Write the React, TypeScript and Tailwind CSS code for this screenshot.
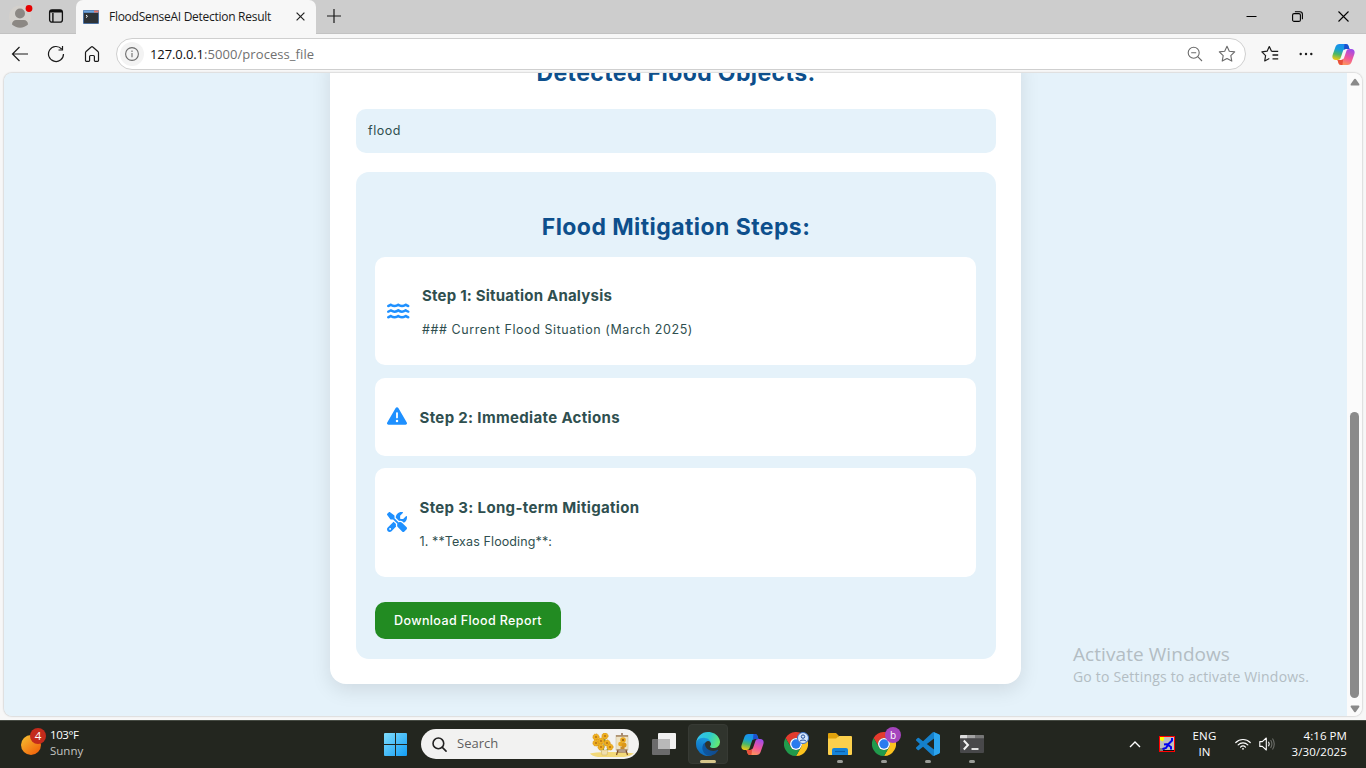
import type { ReactNode } from 'react';
import { FaWater, FaTriangleExclamation, FaScrewdriverWrench } from 'react-icons/fa6';

function CopilotLogo({ id, className }: { id: string; className: string }) {
  const shape =
    'M8 1.5h6.2c1.6 0 2.4.8 2.9 2.2l.9 2.900h-3.600c-1.600 0-2.600.8-3.100 2.300L9.200 15.300c-.5 1.500-1.400 2.200-2.900 2.200H4.200C1.200 17.500.300 15.200 1.200 12.200L3.900 4.400C4.600 2.500 5.900 1.500 8 1.500Z';
  return (
    <svg viewBox="0.500 0.500 23 23" className={className}>
      <defs>
        <linearGradient id={`${id}a`} x1="0.5" y1="0" x2="0.25" y2="1">
          <stop offset="0" stopColor="#1b8df0" />
          <stop offset="0.35" stopColor="#169fd8" />
          <stop offset="0.65" stopColor="#4cb765" />
          <stop offset="1" stopColor="#f2c811" />
        </linearGradient>
        <linearGradient id={`${id}b`} x1="0.3" y1="1" x2="0.7" y2="0">
          <stop offset="0" stopColor="#a04bea" />
          <stop offset="0.5" stopColor="#f0569c" />
          <stop offset="1" stopColor="#ff9a54" />
        </linearGradient>
      </defs>
      <path d={shape} fill={`url(#${id}a)`} />
      <path d="M13 1.500h1.300c1.500 0 2.400.8 2.800 2.200l.9 2.900h-3.600c-.8 0-1.400.2-2 .6Z" fill="#1c50cf" />
      <g transform="rotate(180 12 12)">
        <path d={shape} fill={`url(#${id}b)`} />
        <path d="M13 1.500h1.300c1.500 0 2.400.8 2.800 2.200l.9 2.900h-3.600c-.8 0-1.400.2-2 .6Z" fill="#e8503a" />
      </g>
    </svg>
  );
}

function ChromeLogo() {
  return (
    <svg viewBox="0 0 48 48" className="size-6">
      <path d="M24 12H44.800A24 24 0 0 0 3.200 12L13.600 30A12 12 0 0 1 24 12Z" fill="#e33b2e" />
      <path d="M44.800 12A24 24 0 0 1 24 48L34.400 30A12 12 0 0 0 24 12Z" fill="#fcc31e" />
      <path d="M3.200 12A24 24 0 0 0 24 48L34.400 30A12 12 0 0 1 13.600 30Z" fill="#219a4c" />
      <circle cx="24" cy="24" r="12" fill="#fff" />
      <circle cx="24" cy="24" r="9.400" fill="#2a7bee" />
    </svg>
  );
}

function EdgeLogo() {
  return (
    <svg viewBox="0 0 256 256" className="size-6">
      <defs>
        <linearGradient id="edgeBase" x1="0" y1="0" x2="1" y2="0">
          <stop offset="0" stopColor="#0c59a4" />
          <stop offset="1" stopColor="#114a8b" />
        </linearGradient>
        <linearGradient id="edgeMid" x1="0.6" y1="0" x2="0.3" y2="1">
          <stop offset="0" stopColor="#1b9de2" />
          <stop offset="1" stopColor="#0b66ba" />
        </linearGradient>
        <linearGradient id="edgeTop" x1="0" y1="0.3" x2="1" y2="0.6">
          <stop offset="0" stopColor="#35c1f1" />
          <stop offset="0.5" stopColor="#2cc9d0" />
          <stop offset="1" stopColor="#66eb6e" />
        </linearGradient>
      </defs>
      <path d="M231 190.500c-3.400 1.800-6.900 3.400-10.500 4.700a101.500 101.500 0 0 1-35.900 6.500c-47.300 0-88.500-32.500-88.500-74.300a31.500 31.500 0 0 1 16.400-27.300c-42.800 1.800-53.800 46.400-53.800 72.500 0 74 68.100 81.400 82.800 81.400 7.900 0 19.800-2.300 27-4.600l1.300-.4a128.300 128.300 0 0 0 66.600-52.800 4 4 0 0 0-5.400-5.700z" fill="url(#edgeBase)" />
      <path d="M105.700 241.400a79.200 79.200 0 0 1-22.700-21.300 80.700 80.700 0 0 1 29.500-120c3.200-1.500 8.500-4.100 15.600-4a32.400 32.400 0 0 1 25.700 13 31.900 31.900 0 0 1 6.300 18.700c0-.2 24.500-79.600-80-79.600-43.900 0-80 41.700-80 78.200a130.200 130.200 0 0 0 12.100 56 128 128 0 0 0 156.400 67 75.500 75.500 0 0 1-62.800-8z" fill="url(#edgeMid)" />
      <path d="M152.300 148.900c-.8 1-3.300 2.500-3.300 5.700 0 2.600 1.700 5.100 4.700 7.200 14.400 10 41.500 8.700 41.600 8.700a59.600 59.600 0 0 0 30.300-8.300 61.400 61.400 0 0 0 30.400-52.900c.3-22.400-8-37.300-11.300-43.900C223.500 23.900 177.700 0 128 0A128 128 0 0 0 0 126.200c.5-36.500 36.800-66 80-66 3.500 0 23.500.3 42 10a72.600 72.600 0 0 1 30.900 29.300c6.100 10.600 7.200 24.100 7.200 29.500s-2.700 13.300-7.800 19.900z" fill="url(#edgeTop)" />
    </svg>
  );
}

function TabStrip() {
  return (
    <div className="flex h-[34px] shrink-0 border-b border-[#c2c2c2] bg-[#cdcdcd]">
      <div className="flex w-[76px] shrink-0 items-center pl-2">
        <svg viewBox="0 0 26 26" className="size-[26px]">
          <circle cx="12" cy="12.500" r="11" fill="#d3d0cc" />
          <circle cx="12" cy="9.500" r="5" fill="#8c8884" />
          <path d="M4 20.500c0-3 2-4.500 4-4.500h8c2 0 4 1.500 4 4.500-2 2-5 3.200-8 3.200s-6-1.200-8-3.200Z" fill="#8c8884" />
          <circle cx="21" cy="4.500" r="3.400" fill="#e60000" />
        </svg>
        <svg viewBox="0 0 16 16" className="-mt-px ml-[14px] size-4" fill="none" stroke="#111" strokeWidth="1.300">
          <rect x="1.600" y="1.800" width="12.800" height="12.400" rx="2.500" />
          <path d="M2 3.800h12M4.900 5v9" strokeWidth="1.400" />
          <path d="M2.500 2.900h11" strokeWidth="2" />
        </svg>
      </div>
      <div className="-mb-px flex w-[240px] shrink-0 items-center rounded-t-[7px] bg-[#f7f7f7] pb-px pl-[7px]">
        <svg viewBox="0 0 16 14" className="h-[14px] w-4">
          <rect width="16" height="14" rx="1" fill="#4b6f9f" />
          <rect x="0.500" y="0.500" width="15" height="2" fill="#6fa5dd" />
          <rect x="11" y="0.500" width="4.500" height="2" fill="#e5776a" />
          <rect x="1" y="3" width="14" height="10" fill="#2e3338" />
          <path d="M3 5l1.500 1.300L3 7.600" fill="none" stroke="#fff" strokeWidth="1" />
        </svg>
        <span className="ml-[10px] w-[187px] whitespace-nowrap text-[12px] tracking-[-0.274px] text-[#1a1a1a]">FloodSenseAI Detection Result</span>
        <svg viewBox="0 0 9 9" className="size-[9px]" fill="none" stroke="#222" strokeWidth="1.200">
          <path d="M.6.6l7.800 7.800M8.400.6L.6 8.400" />
        </svg>
      </div>
      <div className="flex flex-1 items-center pl-[11px]">
        <svg viewBox="0 0 14 14" className="-mt-px size-[14px]" fill="none" stroke="#1a1a1a" strokeWidth="1.200">
          <path d="M7 0v14M0 7h14" />
        </svg>
      </div>
      <div className="flex items-center gap-[35px] pr-[17px] text-black">
        <svg viewBox="0 0 11 11" className="size-[11px]" fill="none" stroke="currentColor">
          <path d="M.5 5.500h10" />
        </svg>
        <svg viewBox="0 0 11 11" className="size-[11px]" fill="none" stroke="currentColor" strokeWidth="1.100">
          <rect x="0.600" y="2.600" width="7.800" height="7.800" rx="1.500" />
          <path d="M2.900.7h5c1.500 0 2.500 1 2.500 2.500v5" />
        </svg>
        <svg viewBox="0 0 11 11" className="size-[11px]" fill="none" stroke="currentColor" strokeWidth="1.100">
          <path d="M.5.5l10 10M10.500.5l-10 10" />
        </svg>
      </div>
    </div>
  );
}

function Toolbar() {
  return (
    <div className="flex h-[39px] shrink-0 items-center bg-[#f7f7f7] pt-px text-[#1b1b1b]">
      <svg viewBox="0 0 18 18" className="ml-[11px] size-[18px]" fill="none" stroke="currentColor" strokeWidth="1.200">
        <path d="M17 9H1.500M8.500 2L1.500 9l7 7" />
      </svg>
      <svg viewBox="0 0 18 18" className="ml-[18px] size-[18px]" fill="none" stroke="currentColor" strokeWidth="1.200">
        <path d="M16.500 9A7.500 7.500 0 1 1 14.600 4M15.500 1v4h-4" />
      </svg>
      <svg viewBox="0 0 18 18" className="ml-[18px] size-[18px]" fill="none" stroke="currentColor" strokeWidth="1.200" strokeLinejoin="round">
        <path d="M2.500 7.800c0-.6.200-1 .6-1.300L8.200 2c.5-.5 1.100-.5 1.600 0l5.100 4.500c.4.300.6.700.6 1.300v7.700c0 .5-.3.800-.8.800h-2.500c-.5 0-.8-.3-.8-.8v-4c0-.6-.4-1-1-1H7.600c-.6 0-1 .4-1 1v4c0 .5-.3.800-.8.800H3.300c-.5 0-.8-.3-.8-.8Z" />
      </svg>
      <div className="ml-[15px] flex h-8 w-[1130px] items-center rounded-full border border-[#cfcfcf] bg-white pl-[3px] pr-[9px] text-[13px]">
        <span className="flex size-6 items-center justify-center rounded-full bg-[#f3f3f3]">
          <svg viewBox="0 0 14 14" className="size-[14px]" fill="none" stroke="#6b6b6b" strokeWidth="1.100">
            <circle cx="7" cy="7" r="6.400" />
            <path d="M7 6v4.300" />
            <path d="M7 3.600v1.300" />
          </svg>
        </span>
        <span className="ml-[6px] pt-px tracking-[-0.1px] text-[#111]">127.0.0.1</span>
        <span className="pt-px tracking-[0.075px] text-[#707070]">:5000/process_file</span>
        <svg viewBox="0 0 16 16" className="ml-auto size-4" fill="none" stroke="#6b6b6b" strokeWidth="1.100">
          <circle cx="6.700" cy="6.700" r="5.500" />
          <path d="M10.700 10.700L15 15M4.200 6.700h5" />
        </svg>
        <svg viewBox="0 0 18 18" className="ml-[15px] size-[18px]" fill="none" stroke="#6b6b6b" strokeWidth="1.100" strokeLinejoin="round">
          <path d="M9 1.300l2.300 4.900 5.400.7-3.900 3.800 1 5.400L9 13.500l-4.800 2.600 1-5.400L1.300 6.900l5.400-.7Z" />
        </svg>
      </div>
      <svg viewBox="0 0 18 18" className="ml-[15px] size-[18px]" fill="none" stroke="currentColor" strokeWidth="1.200" strokeLinejoin="round">
        <path d="M10.500 6.200L8.300 1.500 6.100 6.200l-5.200.7 3.700 3.700-.9 5.400 4.600-2.500" />
        <path d="M10.400 6.300h6.800M11.500 10h5.700M11.500 13.800h5.700" strokeWidth="1.300" />
      </svg>
      <svg viewBox="0 0 14 4" className="ml-[20px] h-1 w-[14px]" fill="currentColor">
        <circle cx="1.700" cy="2" r="1.200" />
        <circle cx="7" cy="2" r="1.200" />
        <circle cx="12.300" cy="2" r="1.200" />
      </svg>
      <CopilotLogo id="bar" className="ml-[19px] size-[23px]" />
    </div>
  );
}

function StepCard({ icon, title, text, className }: { icon: ReactNode; title: ReactNode; text?: ReactNode; className: string }) {
  return (
    <div className={`flex items-center gap-[12.5px] rounded-[10px] bg-white px-3 ${className}`}>
      <span className="shrink-0 text-[#1e90ff]">{icon}</span>
      <div className={text ? 'pt-[3px]' : 'pt-px'}>
        <h3 className="text-[15px] font-bold leading-[22px] whitespace-nowrap">{title}</h3>
        {text && <p className="mt-[13px] text-[12.5px] leading-5 whitespace-nowrap">{text}</p>}
      </div>
    </div>
  );
}

function ResultPage() {
  return (
    <div className="flex-1 overflow-hidden bg-[#e5f2fa] font-[Inter,sans-serif] text-[#2f4f4f]">
      <main className="-mt-[20px] ml-[326px] h-[631px] w-[691px] rounded-[16px] bg-white pl-[26px] pr-[25px] shadow-[0_6px_20px_rgba(0,0,0,0.1)]">
        <h2 className="text-center text-[23px] font-bold leading-10 tracking-[0.392px] text-[#0d4f8c]">Detected Flood Objects:</h2>
        <div className="mt-4 h-11 rounded-[10px] bg-[#e5f2fa] px-3 text-[12.5px] leading-[43px] tracking-[0.537px]">flood</div>
        <section className="mt-[19px] h-[487px] rounded-[13px] bg-[#e5f2fa] px-[19px] pt-[35px]">
          <h2 className="text-center text-[23px] font-bold leading-10 tracking-[0.429px] text-[#0d4f8c]">Flood Mitigation Steps:</h2>
          <div className="mr-px mt-[10px]">
            <StepCard
              className="h-[108px]"
              icon={<FaWater className="h-5 w-[22.5px]" preserveAspectRatio="none" />}
              title={<span className="tracking-[0.209px]">Step 1: Situation Analysis</span>}
              text={<span className="tracking-[0.58px]">### Current Flood Situation (March 2025)</span>}
            />
            <StepCard
              className="mt-[13px] h-[78px]"
              icon={<FaTriangleExclamation className="mb-[2px] size-5" />}
              title={<span className="tracking-[0.344px]">Step 2: Immediate Actions</span>}
            />
            <StepCard
              className="mt-3 h-[109px]"
              icon={<FaScrewdriverWrench className="mb-[2px] size-5" />}
              title={<span className="tracking-[0.339px]">Step 3: Long-term Mitigation</span>}
              text={<span className="tracking-[0.112px]">1. **Texas Flooding**:</span>}
            />
          </div>
          <button className="mt-[25px] flex h-[37px] w-[186px] items-center justify-center rounded-[10px] bg-[#228b22] pt-px text-[12.5px] font-medium tracking-[0.392px] whitespace-nowrap text-white">
            Download Flood Report
          </button>
        </section>
      </main>
    </div>
  );
}

function ScrollBar() {
  return (
    <div className="flex w-[15px] shrink-0 flex-col items-center bg-[#fbfbfb]">
      <svg viewBox="0 0 10 8" className="mt-[5px] h-2 w-[10px] shrink-0" fill="#8a8a8a">
        <path d="M4.300 1Q5 .3 5.700 1L9.300 6Q9.800 7.500 8.700 7.500H1.300Q.2 7.500.7 6Z" />
      </svg>
      <div className="mt-[326px] h-[286px] w-[9px] rounded-full bg-[#8a8a8a]" />
      <svg viewBox="0 0 10 8" className="mt-[7px] h-2 w-[10px] shrink-0 rotate-180" fill="#8a8a8a">
        <path d="M4.300 1Q5 .3 5.700 1L9.300 6Q9.800 7.500 8.700 7.500H1.300Q.2 7.500.7 6Z" />
      </svg>
    </div>
  );
}

function AppSlot({ children, mark }: { children: ReactNode; mark?: 'active' | 'open' }) {
  return (
    <div className="flex w-11 justify-center">
      <div className={`relative flex h-10 w-10 items-center justify-center rounded-[4px] ${mark === 'active' ? 'border border-[#373a34] bg-[#30342d]' : ''}`}>
        {children}
        {mark === 'active' && <span className="absolute bottom-0 h-[3px] w-4 rounded-full bg-[#d6c78c]" />}
        {mark === 'open' && <span className="absolute bottom-px h-[3px] w-[6px] rounded-full bg-[#9a9c97]" />}
      </div>
    </div>
  );
}

const petals = [
  [4, 4], [13, 3], [4, 10], [15, 10], [9, 8], [18, 14], [9, 14],
];

function SearchArt() {
  return (
    <svg viewBox="0 0 44 24" className="h-6 w-11">
      <path d="M0 20.500Q6 18.500 22 19T44 20.500Q40 23.500 34 24H8Q2 23 0 20.500Z" fill="#f3d978" />
      <path d="M7 10l6 10M15 5l-2 14M19 14l-4 6M8 7l6-1" stroke="#5c8a3a" strokeWidth="1.200" fill="none" />
      {petals.map(([x, y]) => (
        <g key={`${x}-${y}`}>
          <circle cx={x + 2} cy={y} r="3.100" fill="#eeb020" stroke="#d68f10" strokeWidth="0.800" strokeDasharray="1.200 0.800" />
          <circle cx={x + 2} cy={y} r="1.100" fill="#b87318" />
        </g>
      ))}
      <path d="M11 17h7l-1 5h-5Z" fill="#f0dfae" stroke="#c9ac62" strokeWidth="0.500" />
      <path d="M32 0v3M28 17l-1.500 5M36 17l1.500 5M27 19h10" stroke="#7b4a22" strokeWidth="1.200" />
      <rect x="26" y="2.500" width="12" height="14.500" fill="#eee3c4" stroke="#c9bea0" strokeWidth="0.600" />
      <path d="M26 3h12M26.500 17h11" stroke="#7b4a22" strokeWidth="0.900" />
      <circle cx="33" cy="7" r="2.800" fill="#e9a81c" />
      <circle cx="30.500" cy="11" r="2.300" fill="#e9a81c" />
      <circle cx="34" cy="12" r="2.500" fill="#dc9718" />
      <circle cx="33" cy="7" r="1.100" fill="#8f5a14" />
      <path d="M30.500 13.500h4v2.500h-4Z" fill="#c98c2a" />
    </svg>
  );
}

function Taskbar() {
  return (
    <div className="flex h-12 shrink-0 items-center border-t border-[#464b43] bg-[#23261f] pb-px text-[11.5px] text-white">
      <div className="flex w-[384px] shrink-0 items-center pb-[2px] pl-5">
        <svg viewBox="0 0 28 30" className="h-[30px] w-7">
          <defs>
            <linearGradient id="sun" x1="0.100" y1="0.100" x2="0.800" y2="0.900">
              <stop offset="0" stopColor="#f5b92e" />
              <stop offset="1" stopColor="#f2660c" />
            </linearGradient>
          </defs>
          <circle cx="11" cy="17" r="10" fill="url(#sun)" />
          <circle cx="18" cy="8" r="8" fill="#c42b1c" />
          <text x="18" y="12" textAnchor="middle" fontSize="11.500" fill="#fff">4</text>
        </svg>
        <div className="ml-[2px] leading-4">
          <div className="tracking-[-0.4px]">103°F</div>
          <div className="text-[#c4c5c2]">Sunny</div>
        </div>
      </div>
      <svg viewBox="0 0 23 23" className="size-[23px]">
        <defs>
          <linearGradient id="win" x1="0" y1="0" x2="1" y2="1" gradientUnits="objectBoundingBox">
            <stop offset="0" stopColor="#7fdcfc" />
            <stop offset="1" stopColor="#129df5" />
          </linearGradient>
        </defs>
        <path d="M1 0H11V11H0V1Q0 0 1 0ZM12 0H22Q23 0 23 1V11H12ZM0 12H11V23H1Q0 23 0 22ZM12 12H23V22Q23 23 22 23H12Z" fill="url(#win)" />
      </svg>
      <div className="ml-[14px] flex h-[30px] w-[218px] items-center rounded-full bg-[#f2f2f1] pl-[11px] pr-[5px] text-[13px] text-[#5f5f5f]">
        <svg viewBox="0 0 16 16" className="size-[15px]" fill="none" stroke="#222" strokeWidth="1.700" strokeLinecap="round">
          <circle cx="6.800" cy="6.800" r="5.700" />
          <path d="M11 11l4 4" />
        </svg>
        <span className="ml-[10px]">Search</span>
        <span className="ml-auto mt-[2px]"><SearchArt /></span>
      </div>
      <div className="ml-[3px] flex">
        <AppSlot>
          <svg viewBox="0 0 24 22" className="mb-px h-[22px] w-6">
            <rect x="6" width="18" height="16" rx="1" fill="#f1f1f1" />
            <rect y="6" width="18" height="16" rx="1" fill="#6b6b6b" />
            <path d="M6 6h12v10H6Z" fill="#b9b9b9" />
          </svg>
        </AppSlot>
        <AppSlot mark="active"><EdgeLogo /></AppSlot>
        <AppSlot><CopilotLogo id="task" className="size-[23px]" /></AppSlot>
        <AppSlot>
          <ChromeLogo />
          <svg viewBox="0 0 12 12" className="absolute right-[7px] top-[8px] size-3">
            <circle cx="6" cy="6" r="5.500" fill="#d4e5fb" stroke="#3b70c4" />
            <circle cx="6" cy="4.600" r="1.700" fill="none" stroke="#234f9a" />
            <path d="M2.800 9.300c.8-1.700 5.600-1.700 6.400 0" fill="none" stroke="#234f9a" />
          </svg>
        </AppSlot>
        <AppSlot mark="open">
          <svg viewBox="0 0 24 22" className="h-[22px] w-6">
            <path d="M0 1Q0 0 1 0H8L10.500 2.500V6H0Z" fill="#e0a20c" />
            <path d="M0 5.500H8L11 3H23Q24 3 24 4V21Q24 22 23 22H1Q0 22 0 21Z" fill="#fcd04c" />
            <path d="M4 22v-5q0-2 2-2h12q2 0 2 2v5Z" fill="#1583d8" />
            <path d="M7 18.500h10" stroke="#0b5ea8" strokeWidth="1.200" />
          </svg>
        </AppSlot>
        <AppSlot mark="open">
          <ChromeLogo />
          <span className="absolute left-[21px] top-[3px] flex size-4 items-center justify-center rounded-full bg-[#a544bd] pb-px text-[10px] leading-4">b</span>
        </AppSlot>
        <AppSlot mark="open">
          <svg viewBox="0 0 24 24" className="size-6">
            <path d="M23.150 2.587L18.210.210a1.494 1.494 0 0 0-1.705.290l-9.460 8.630-4.120-3.128a.999.999 0 0 0-1.276.057L.327 7.261A1 1 0 0 0 .326 8.740L3.899 12 .326 15.260a1 1 0 0 0 .001 1.479L1.650 17.940a.999.999 0 0 0 1.276.057l4.120-3.128 9.460 8.630a1.492 1.492 0 0 0 1.704.290l4.942-2.377A1.500 1.500 0 0 0 24 20.060V3.939a1.500 1.500 0 0 0-.850-1.352zm-5.146 14.861L10.826 12l7.178-5.448v10.896z" fill="#1580cb" />
            <path d="M18 .2l5.150 2.387A1.500 1.500 0 0 1 24 3.939V20.060a1.500 1.500 0 0 1-.850 1.352L18 23.800Z" fill="#2ba4ee" />
          </svg>
        </AppSlot>
        <AppSlot mark="open">
          <svg viewBox="0 0 24 18" className="h-[18px] w-6">
            <rect width="24" height="18" rx="1" fill="#48484a" />
            <path d="M0 3.200V1Q0 0 1 0H7V3.200Z" fill="#dcdcdc" />
            <path d="M7 0h8v3.200H7Z" fill="#a3a3a3" />
            <path d="M15 0h8q1 0 1 1v2.200h-9Z" fill="#777" />
            <path d="M3.800 5.500L8 10l-4.200 4.500" fill="none" stroke="#f2f2f2" strokeWidth="2" />
            <path d="M11.500 14h7" stroke="#f2f2f2" strokeWidth="1.800" />
          </svg>
        </AppSlot>
      </div>
      <div className="ml-auto flex items-center pr-[19px]">
        <svg viewBox="0 0 12 7" className="h-[7px] w-3" fill="none" stroke="#fff" strokeWidth="1.400">
          <path d="M1 6l5-5 5 5" />
        </svg>
        <svg viewBox="0 0 16 16" className="ml-[18px] size-4">
          <rect x="0.500" y="0.500" width="15" height="15" fill="#c0c0c0" stroke="#f00" />
          <path d="M1 1h4v3l-1.500 1.500L1 4Z" fill="#ff0" />
          <path d="M1 12h5v3H1Z" fill="#808080" />
          <path d="M13 2v2.500L9.500 8 5 8.500M9.500 8L7 12l-3.500 1M9 9l3 2v2.500" fill="none" stroke="#0000f0" strokeWidth="2" />
          <path d="M4 14.500h11" stroke="#111" strokeWidth="1" />
        </svg>
        <div className="ml-[18px] text-center leading-4 tracking-[0.19px]">
          <div>ENG</div>
          <div>IN</div>
        </div>
        <svg viewBox="0 0 16 12" className="ml-[18px] h-3 w-4" fill="none" stroke="#fff" strokeWidth="1.200" strokeLinecap="round">
          <path d="M.8 4.500a10.200 10.200 0 0 1 14.400 0M3.200 6.900a6.800 6.800 0 0 1 9.600 0M5.500 9.100a3.600 3.600 0 0 1 5 0" />
          <circle cx="8" cy="10.800" r="0.900" fill="#fff" stroke="none" />
        </svg>
        <svg viewBox="0 0 16 14" className="ml-2 h-[14px] w-4" fill="none" stroke="#fff" strokeWidth="1.100" strokeLinejoin="round">
          <path d="M.8 4.600h2.500L7.300 1v12L3.300 9.400H.8Z" />
          <path d="M9.500 4.800q1.500 2.200 0 4.400" />
          <path d="M11.600 3q2.600 4 0 8M13.500 1.500q3.500 5.500 0 11" stroke="#6c6e69" />
        </svg>
        <div className="ml-[17px] text-right leading-4">
          <div className="tracking-[0.07px]">4:16 PM</div>
          <div className="tracking-[0.115px]">3/30/2025</div>
        </div>
      </div>
    </div>
  );
}

export default function App() {
  return (
    <div className="relative flex h-[768px] w-[1366px] flex-col overflow-hidden bg-[#f7f7f7] font-['Open_Sans','Noto_Sans',sans-serif]">
      <TabStrip />
      <Toolbar />
      <div className="mx-1 flex h-[643px] shrink-0 overflow-hidden rounded-[8px] shadow-[0_0_2px_rgba(0,0,0,0.35)]">
        <ResultPage />
        <ScrollBar />
      </div>
      <div className="h-1 shrink-0" />
      <Taskbar />
      <div className="pointer-events-none absolute left-[1073px] top-[642px] whitespace-nowrap text-[#b3bdc3]">
        <div className="text-[19px] leading-6 tracking-[0.066px]">Activate Windows</div>
        <div className="text-[14px] leading-[22px] tracking-[0.189px]">Go to Settings to activate Windows.</div>
      </div>
    </div>
  );
}
